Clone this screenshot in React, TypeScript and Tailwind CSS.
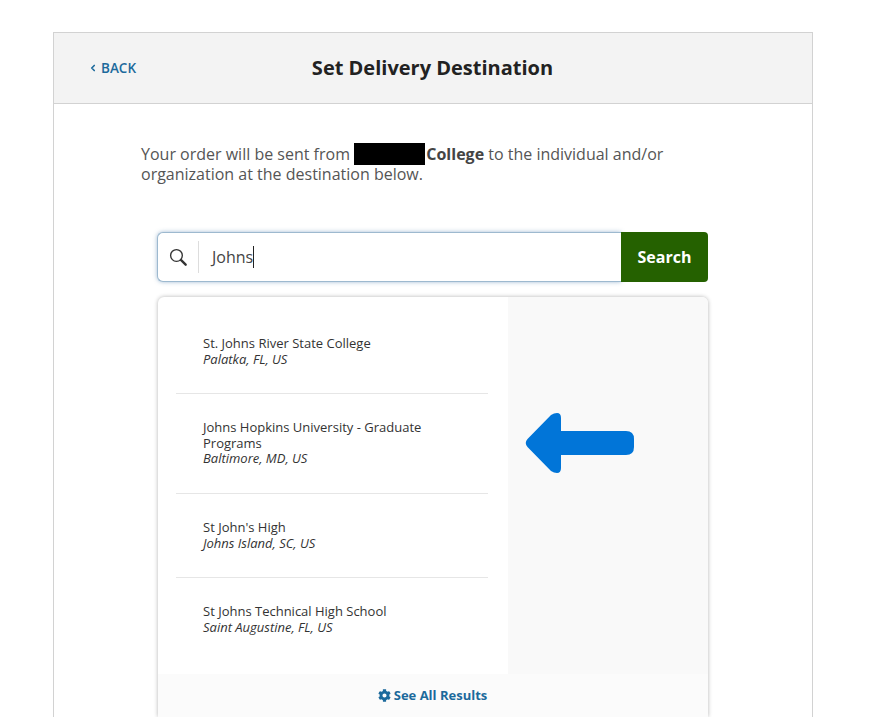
import { ChevronLeft } from "lucide-react";
import { FaCog } from "react-icons/fa";

const RESULTS = [
  { name: "St. Johns River State College", place: "Palatka, FL, US", box: "h-[97px] pt-[39px]" },
  { name: "Johns Hopkins University - Graduate Programs", place: "Baltimore, MD, US", box: "h-[100px] pt-[26px]" },
  { name: "St John's High", place: "Johns Island, SC, US", box: "h-[84px] pt-[26px]" },
  { name: "St Johns Technical High School", place: "Saint Augustine, FL, US", box: "h-[96px] pt-[26px]" },
];

export default function App() {
  return (
    <div className="h-[717px] overflow-hidden bg-white pt-8 pl-[53px] font-['Open_Sans',sans-serif]">
      <div className="h-[720px] w-[760px] border border-b-0 border-[#d2d2d2]">
        {/* Header */}
        <div className="relative flex h-[71px] items-center justify-center border-b border-[#d2d2d2] bg-[#f3f3f3]">
          <a className="absolute left-[34px] top-[26px] flex items-center text-[13.5px] font-semibold leading-[18px] text-[#1c6a9c]">
            <ChevronLeft size={10} strokeWidth={4} className="mr-[3px]" />
            BACK
          </a>
          <h1 className="mr-[1px] text-[20px] font-bold leading-none text-[#222222]">Set Delivery Destination</h1>
        </div>

        <div className="pl-[87px] pt-[40px]">
          <p className="w-[560px] text-base leading-[20px] text-[#555555]">
            Your order will be sent from{" "}
            <span className="my-[-4px] inline-block h-[22px] w-[71px] bg-black align-[-1px]" />{" "}
            <b className="ml-[-3px] font-bold text-[#444444]">College</b> to the individual and/or organization at the destination below.
          </p>

          {/* Search */}
          <div className="ml-[16px] mt-[48px] flex h-[50px] w-[551px]">
            <div className="flex w-[464px] items-center rounded-l-[6px] border border-r-0 border-[#9db9cf] bg-white shadow-[0_0_4px_rgba(70,120,170,0.5)]">
              <svg viewBox="0 0 20 20" className="ml-[11px] h-[18px] w-[18px] text-[#333333]" fill="none" stroke="currentColor">
                <circle cx="8.3" cy="8.3" r="6.5" strokeWidth="1.5" />
                <path d="M13.5 13.5l5 5" strokeWidth="2.6" strokeLinecap="round" />
              </svg>
              <div className="ml-[11px] h-[32px] w-px bg-[#dddddd]" />
              <span className="ml-[13px] border-r border-[#222222] text-base leading-[22px] text-[#444444]">Johns</span>
            </div>
            <button className="z-10 w-[87px] rounded-r-[4px] bg-[#256100] text-base font-bold text-white">Search</button>
          </div>

          {/* Results */}
          <div className="relative ml-[17px] mt-[15px] w-[550px] rounded-t-[6px] bg-white shadow-[0_0_4px_rgba(0,0,0,0.3)]">
            <div className="flex h-[377px]">
              <ul className="w-[350px]">
                {RESULTS.map((r, i) => (
                  <li key={r.name} className={`${r.box} ml-[18px] mr-[20px] text-[13px] leading-[15.5px] text-[#333333] ${i < 3 ? "border-b border-[#e6e6e6]" : ""}`}>
                    <div className="pl-[27px]">
                      <div className="w-[250px]">{r.name}</div>
                      <div className="italic">{r.place}</div>
                    </div>
                  </li>
                ))}
              </ul>
              <div className="flex-1 rounded-tr-[6px] bg-[#f9f9f9]" />
            </div>
            <div className="flex h-[43px] items-center justify-center bg-[#fbfbfb] pr-px text-[13px] font-bold text-[#1c6a9c]">
              <FaCog size={13} className="mr-[3px]" />
              See All Results
            </div>
            {/* annotation arrow */}
            <svg viewBox="0 0 110 60" className="absolute left-[367px] top-[116px] h-[60px] w-[110px]">
              <path
                d="M2.5 26 L26 2 Q29 0 32 0 Q36 0 36 5 V18 H101 Q109 18 109 26 V34 Q109 42 101 42 H36 V55 Q36 60 32 60 Q29 60 26 58 L2.5 34 Q-1 30 2.5 26 Z"
                fill="#0175d8"
              />
            </svg>
          </div>
        </div>
      </div>
    </div>
  );
}
